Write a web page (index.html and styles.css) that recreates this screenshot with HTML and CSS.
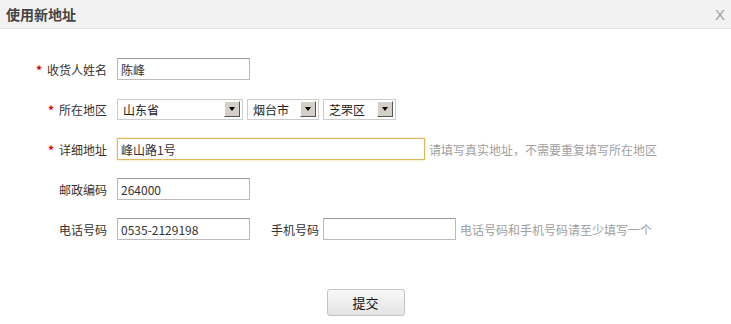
FILE: index.html
```html
<!DOCTYPE html>
<html lang="zh-CN">
<head>
    <meta charset="UTF-8">
    <title>使用新地址</title>
    <link rel="stylesheet" href="styles.css">
</head>
<body>
    <div class="dialog">
        <div class="dialog-head">
            <h2>使用新地址</h2>
            <span class="close">X</span>
        </div>
        <form class="addr-form">
            <div class="row">
                <label class="lbl"><i>*</i>收货人姓名</label>
                <input class="txt" type="text" value="陈峰">
            </div>
            <div class="row">
                <label class="lbl"><i>*</i>所在地区</label>
                <div class="sel w1"><select><option>山东省</option></select><b class="arrow"></b></div>
                <div class="sel w2"><select><option>烟台市</option></select><b class="arrow"></b></div>
                <div class="sel w3"><select><option>芝罘区</option></select><b class="arrow"></b></div>
            </div>
            <div class="row">
                <label class="lbl"><i>*</i>详细地址</label>
                <input class="txt long focus" type="text" value="峰山路1号">
                <span class="hint">请填写真实地址，不需要重复填写所在地区</span>
            </div>
            <div class="row">
                <label class="lbl">邮政编码</label>
                <input class="txt" type="text" value="264000">
            </div>
            <div class="row">
                <label class="lbl">电话号码</label>
                <input class="txt" type="text" value="0535-2129198">
                <label class="lbl2">手机号码</label>
                <input class="txt" type="text" value="">
                <span class="hint">电话号码和手机号码请至少填写一个</span>
            </div>
            <div class="actions">
                <button type="button" class="btn">提交</button>
            </div>
        </form>
    </div>
</body>
</html>
```

FILE: styles.css
```css
body{
    margin: 0;
    background-color: #fff;
    font-family: "Noto Sans CJK SC", "Liberation Sans", sans-serif;
    font-size: 12px;
    color: #333;
}
.dialog-head{
    display: flex;
    align-items: center;
    justify-content: space-between;
    height: 28px;
    padding: 0 6px 0 6px;
    background-color: #f2f2f2;
    border-bottom: 1px solid #e3e3e3;
}
.dialog-head h2{
    margin: 0;
    font-size: 14px;
    font-weight: bold;
    color: #444;
}
.close{
    font-family: "Liberation Sans", sans-serif;
    font-size: 15px;
    color: #a0a0a0;
    line-height: 1;
}
.addr-form{
    padding-top: 20px;
}
.row{
    display: flex;
    align-items: center;
    height: 40px;
}
.lbl{
    width: 117px;
    padding-right: 10px;
    text-align: right;
    box-sizing: border-box;
}
.lbl i{
    font-style: normal;
    color: #d00;
    margin-right: 5px;
    font-weight: bold;
}
.lbl2{
    margin: 0 4px 0 21px;
}
.txt{
    box-sizing: border-box;
    width: 133px;
    height: 22px;
    padding: 0 3px;
    border: 1px solid #bbb;
    border-top-color: #999;
    font-family: inherit;
    font-size: 12px;
    color: #333;
    outline: none;
}
.txt.long{
    width: 308px;
}
.txt.focus{
    border: 1px solid #e0b65c;
    box-shadow: 0 0 2px #f1cf86;
}
.hint{
    margin-left: 4px;
    color: #a0a0a0;
}
.sel{
    display: flex;
    align-items: center;
    box-sizing: border-box;
    height: 21px;
    margin-right: 4px;
    border: 1px solid #ccc;
    padding-right: 2px;
}
.sel.w1{ width: 126px; }
.sel.w2{ width: 72px; }
.sel.w3{ width: 73px; }
.sel select{
    flex: 1;
    min-width: 0;
    appearance: none;
    border: none;
    background: none;
    padding: 0 5px;
    font-family: inherit;
    font-size: 12px;
    color: #222;
    outline: none;
}
.arrow{
    display: flex;
    align-items: center;
    justify-content: center;
    width: 16px;
    height: 16px;
    box-sizing: border-box;
    background-color: #d4d0c8;
    border: 1px solid;
    border-color: #fff #555 #555 #fff;
}
.arrow::after{
    content: "";
    border-left: 3px solid transparent;
    border-right: 3px solid transparent;
    border-top: 4px solid #000;
}
.actions{
    display: flex;
    justify-content: center;
    margin-top: 40px;
}
.btn{
    width: 78px;
    height: 27px;
    border: 1px solid #c4c4c4;
    border-radius: 3px;
    background: linear-gradient(#f8f8f8, #e4e4e4);
    font-family: inherit;
    font-size: 13px;
    color: #111;
}
```
